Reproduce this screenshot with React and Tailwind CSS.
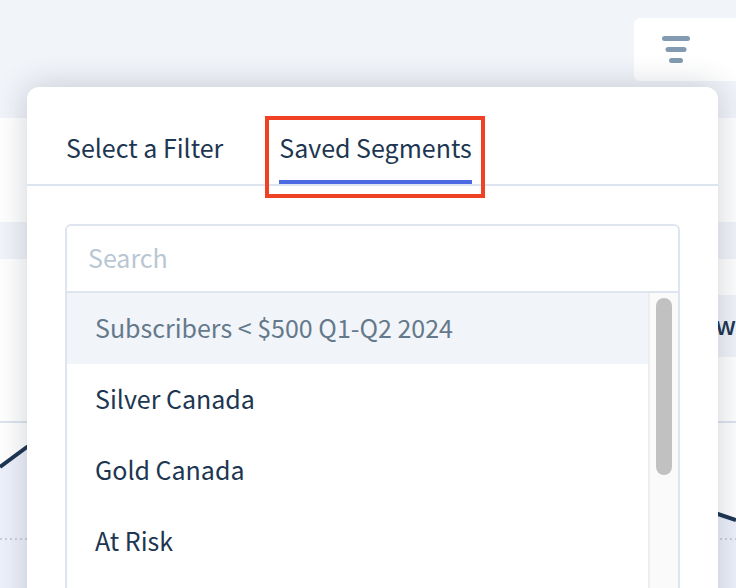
export default function App() {
  const rows = ["Silver Canada", "Gold Canada", "At Risk"];
  return (
    <div className="relative w-[736px] h-[588px] overflow-hidden bg-white text-[#1d3651] font-['Noto_Sans_CJK_SC',sans-serif]">
      <div className="h-[118px] bg-[#f1f4f9] flex justify-end pt-[18px]">
        <button className="w-[102px] h-[63px] bg-white rounded-l-md flex pl-[27px] pt-[17px]">
          <svg width="30" height="29" viewBox="0 0 30 29" fill="#839bb0">
            <rect x="1" y="1" width="28" height="5" rx="2.5" />
            <rect x="4.500" y="12" width="21" height="5" rx="2.5" />
            <rect x="8" y="23" width="14" height="5" rx="2.5" />
          </svg>
        </button>
      </div>
      <div className="h-[104px]" />
      <div className="h-[37px] bg-[#f1f4f9]" />
      <div className="h-[36px]" />
      <div className="flex justify-end">
        <div className="w-[120px] h-[62px] bg-[#f1f4f9] flex items-center justify-end pb-[3px] text-[25px] font-medium whitespace-nowrap">
          View
        </div>
      </div>
      <div className="h-[66px] border-b-2 border-[#dce5ef]" />
      <svg width="736" height="165" viewBox="0 0 736 165" className="block">
        <path d="M0 44 L27 24 L718 91 L736 97 V165 H0 Z" fill="#eef1fb" />
        <path d="M0 44 L27 24 L718 91 L736 97" fill="none" stroke="#1d3651" strokeWidth="4" />
        <path d="M0 116 H736" stroke="#c9cfdc" strokeWidth="2" strokeDasharray="2 3" />
      </svg>

      <div className="absolute left-[27px] top-[87px] w-[691px] h-[560px] bg-white rounded-t-xl shadow-[0_0_32px_rgba(30,45,70,0.22)]">
        <div className="h-[99px] border-b-2 border-[#dce5ef] flex gap-[56px] pl-[39px]">
          <div className="h-[97px] pt-[38px] text-[25px] leading-[44px] whitespace-nowrap">Select a Filter</div>
          <div className="h-[97px] pt-[38px] text-[25px] leading-[44px] whitespace-nowrap border-b-4 border-[#4a69e2]">Saved Segments</div>
        </div>
        <div className="mt-[38px] mx-[38px] w-[615px] border-2 border-[#dfe5ee] rounded-t-md">
          <div className="h-[67px] border-b-2 border-[#dfe5ee] flex items-center pl-[21px] pb-[1px] text-[25px] text-[#b9c7d3]">Search</div>
          <div className="flex h-[400px]">
            <ul className="flex-1 text-[25px]">
              <li className="h-[71px] flex items-center pl-[28px] pb-[1px] bg-[#f1f4f9] text-[#64798b]">Subscribers &lt; $500 Q1-Q2 2024</li>
              {rows.map((r) => (
                <li key={r} className="h-[71px] flex items-center pl-[28px] pb-[1px]">{r}</li>
              ))}
            </ul>
            <div className="w-[30px] bg-[#fafafa] border-l-2 border-[#eeeeee] pl-[6px] pt-[5px]">
              <div className="w-[16px] h-[177px] rounded-lg bg-[#c1c1c1]" />
            </div>
          </div>
        </div>
      </div>

      <div className="absolute left-[265px] top-[116px] w-[220px] h-[82px] border-4 border-[#f04124]" />
    </div>
  );
}
